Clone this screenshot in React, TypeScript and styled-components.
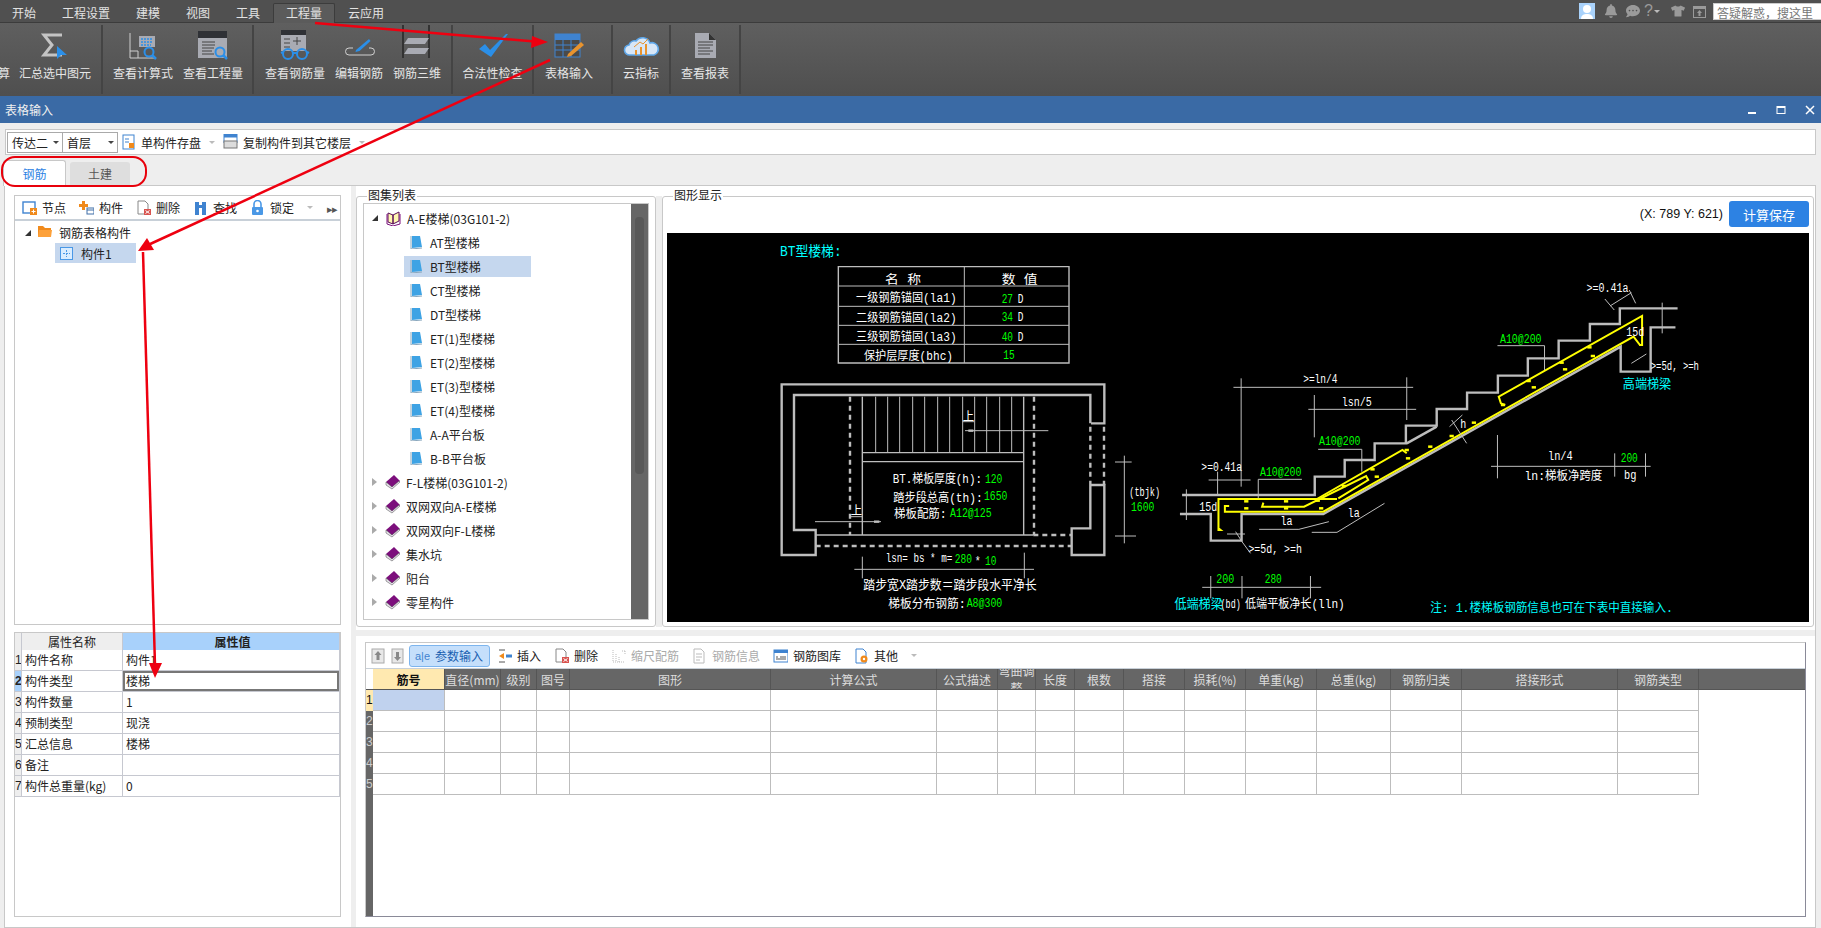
import type { ReactNode } from "react";
import styled, { createGlobalStyle } from "styled-components";
import { FaBell, FaCommentDots, FaTshirt } from "react-icons/fa";

const GlobalStyle = createGlobalStyle`
  html, body {
    margin: 0;
    padding: 0;
    overflow: hidden;
    background: #eeeeee;
  }
  body, button {
    font-family: "Noto Sans CJK SC", "Liberation Sans", sans-serif;
    font-size: 12px;
    color: #222;
  }
`;

const Page = styled.div`
  position: relative;
  width: 1821px;
  height: 928px;
  display: flex;
  flex-direction: column;
  overflow: hidden;
`;

/* ---------- top menu ---------- */

const MenuBar = styled.div`
  height: 23px;
  box-sizing: border-box;
  display: flex;
  align-items: flex-end;
  padding-left: 0;
  background: #505050;
  border-bottom: 1px solid #3c3c3c;
`;

const MenuTab = styled.div<{ $active?: boolean }>`
  height: ${(p) => (p.$active ? 19 : 22)}px;
  line-height: ${(p) => (p.$active ? 17 : 24)}px;
  padding: 0 13px;
  margin-bottom: -1px;
  color: #e2e2e2;
  ${(p) =>
    p.$active &&
    `background: #5b5b5b;
     border: 1px solid #3c3c3c;
     border-bottom: none;
     border-radius: 2px 2px 0 0;
     padding: 0 12px;`}
  &:first-child {
    margin-left: -1px;
  }
`;

const MenuRight = styled.div`
  margin-left: auto;
  height: 22px;
  display: flex;
  align-items: center;
  color: #9a9a9a;
`;

const UserBadge = styled.div`
  width: 16px;
  height: 16px;
  margin-right: 9px;
  background: #a9d2fb;
`;

const HelpMark = styled.span`
  margin: 0 1px 0 4px;
  font: 16px "Liberation Sans", sans-serif;
`;

const SearchBox = styled.div`
  width: 108px;
  height: 17px;
  line-height: 17px;
  margin-left: 6px;
  padding-left: 3px;
  box-sizing: border-box;
  background: #fff;
  border: 1px solid #ccc;
  border-right: none;
  color: #777;
`;

/* ---------- ribbon ---------- */

const Ribbon = styled.div`
  height: 73px;
  display: flex;
  background: linear-gradient(#5f5f5f, #4f4f4f);
`;

const RibbonGroup = styled.div<{ $w: number; $pad?: number }>`
  width: ${(p) => p.$w}px;
  box-sizing: border-box;
  padding-left: ${(p) => p.$pad ?? 0}px;
  display: flex;
  position: relative;
  overflow: hidden;
  border-right: 2px solid #444;
  margin: 2px 0;
`;

const RibbonBtn = styled.div<{ $w: number }>`
  width: ${(p) => p.$w}px;
  flex: none;
  display: flex;
  flex-direction: column;
  align-items: center;
  color: #e6e6e6;
  white-space: nowrap;
`;

const RibbonLabel = styled.div`
  line-height: 16px;
`;

const ClippedLabel = styled.div`
  position: absolute;
  left: -2px;
  top: 40px;
  line-height: 16px;
  color: #e6e6e6;
`;

/* ---------- title bar ---------- */

const TitleBar = styled.div`
  height: 27px;
  display: flex;
  align-items: center;
  padding: 0 4px 0 5px;
  background: #3a6aa5;
  color: #f0f0f0;
`;

const WindowBtns = styled.div`
  margin-left: auto;
  display: flex;
  gap: 15px;
`;

/* ---------- window body ---------- */

const Body = styled.div`
  flex: 1;
  min-height: 0;
  display: flex;
  flex-direction: column;
  padding: 6px 5px 0 4px;
  background: #eeeeee;
`;

const TopTools = styled.div`
  height: 26px;
  box-sizing: border-box;
  display: flex;
  align-items: center;
  margin-left: 1px;
  padding-left: 1px;
  background: #fff;
  border: 1px solid #c8c8c8;
`;

const SelectBox = styled.div<{ $w: number }>`
  width: ${(p) => p.$w}px;
  height: 21px;
  box-sizing: border-box;
  display: flex;
  align-items: center;
  justify-content: space-between;
  padding: 0 3px 0 4px;
  border: 1px solid #aaa;
  & + & {
    border-left: none;
  }
`;

const Caret = styled.i<{ $light?: boolean }>`
  width: 0;
  height: 0;
  flex: none;
  border-left: 3px solid transparent;
  border-right: 3px solid transparent;
  border-top: 3px solid ${(p) => (p.$light ? "#bbb" : "#444")};
`;

const ToolGroup = styled.div<{ $gap?: number; $pad?: number }>`
  display: flex;
  align-items: center;
  gap: ${(p) => p.$gap ?? 13}px;
  padding-left: ${(p) => p.$pad ?? 0}px;
`;

const ToolItem = styled.div<{ $off?: boolean; $active?: boolean }>`
  display: flex;
  align-items: center;
  gap: 5px;
  white-space: nowrap;
  color: ${(p) => (p.$off ? "#aaa" : "#222")};
  ${(p) =>
    p.$active &&
    `height: 20px;
     padding: 0 6px 0 5px;
     background: #c5dffb;
     border: 1px solid #7db5ee;
     border-radius: 3px;
     color: #1a5fb0;`}
`;

const TabRow = styled.div`
  position: relative;
  height: 25px;
  margin-top: 5px;
  display: flex;
  align-items: flex-end;
  gap: 4px;
  padding-left: 0;
`;

const Tab = styled.div<{ $active?: boolean }>`
  width: ${(p) => (p.$active ? 63 : 60)}px;
  height: ${(p) => (p.$active ? 26 : 23)}px;
  box-sizing: border-box;
  margin-left: ${(p) => (p.$active ? -1 : 0)}px;
  display: flex;
  align-items: center;
  justify-content: center;
  border-radius: 3px 3px 0 0;
  color: ${(p) => (p.$active ? "#2d82e3" : "#555")};
  background: ${(p) => (p.$active ? "#fff" : "#dedede")};
  border: ${(p) => (p.$active ? "1px solid #c8c8c8" : "none")};
  border-bottom: none;
  margin-bottom: ${(p) => (p.$active ? -1 : 0)}px;
  z-index: 1;
`;

const RedOutline = styled.div`
  position: absolute;
  left: -3px;
  top: -4px;
  width: 146px;
  height: 31px;
  box-sizing: border-box;
  border: 2px solid #e8000b;
  border-radius: 14px;
  z-index: 2;
`;

const ContentPanel = styled.div`
  flex: 1;
  min-height: 0;
  display: grid;
  grid-template-columns: 346px 5px 1fr;
  background: #fff;
  border: 1px solid #c8c8c8;
`;

const LeftCol = styled.div`
  display: flex;
  flex-direction: column;
  gap: 7px;
  padding: 9px 10px 10px 9px;
  min-height: 0;
`;

const Splitter = styled.div`
  background: #eeeeee;
`;

const TreeBox = styled.div`
  height: 430px;
  box-sizing: border-box;
  flex: none;
  border: 1px solid #c8c8c8;
`;

const BoxTools = styled.div`
  height: 25px;
  box-sizing: border-box;
  display: flex;
  align-items: center;
  padding: 0 3px 0 7px;
  border-bottom: 2px solid #c8d0d8;
`;

const More = styled.span`
  margin-left: auto;
  font-size: 11px;
  letter-spacing: -1px;
  color: #555;
`;

const LeftTree = styled.div`
  padding-top: 1px;
`;

const LeftRoot = styled.div`
  height: 21px;
  display: flex;
  align-items: center;
  padding-left: 10px;
`;

const Expander = styled.i<{ $open?: boolean }>`
  width: 0;
  height: 0;
  flex: none;
  ${(p) =>
    p.$open
      ? `border-left: 6px solid transparent; border-bottom: 6px solid #333;`
      : `border-left: 5px solid #aaa; border-top: 4px solid transparent; border-bottom: 4px solid transparent;`}
`;

const RootLabel = styled.span`
  margin-left: 7px;
`;

const LeftLeaf = styled.div`
  width: 81px;
  height: 20px;
  margin-left: 40px;
  display: flex;
  align-items: center;
  gap: 8px;
  padding-left: 5px;
  box-sizing: border-box;
  background: #c5d7ee;
`;

/* property table */

const PropBox = styled.div`
  flex: 1;
  min-height: 0;
  border: 1px solid #c8c8c8;
`;

const PropRow = styled.div<{ $head?: boolean }>`
  display: grid;
  grid-template-columns: 7px 101px 1fr;
  height: ${(p) => (p.$head ? 17 : 21)}px;
  line-height: ${(p) => (p.$head ? 17 : 20)}px;
  box-sizing: border-box;
  border-bottom: ${(p) => (p.$head ? "none" : "1px solid #c6c8d0")};
  border-right: 1px solid #c6c8d0;
`;

const RowNo = styled.div<{ $on?: boolean }>`
  background: ${(p) => (p.$on ? "#a8d1fb" : "#eeeeee")};
  font-weight: ${(p) => (p.$on ? 700 : 400)};
  font-family: "Liberation Sans", sans-serif;
  font-size: 12px;
  overflow: hidden;
  border-right: 1px solid #c6c8d0;
`;

const PropName = styled.div<{ $head?: boolean }>`
  padding-left: ${(p) => (p.$head ? 0 : 3)}px;
  text-align: ${(p) => (p.$head ? "center" : "left")};
  background: ${(p) => (p.$head ? "#eeeeee" : "#fff")};
  border-right: 1px solid #c6c8d0;
  white-space: nowrap;
`;

const PropValue = styled.div<{ $head?: boolean; $sel?: boolean }>`
  padding-left: 3px;
  text-align: ${(p) => (p.$head ? "center" : "left")};
  font-weight: ${(p) => (p.$head ? 700 : 400)};
  background: ${(p) => (p.$head ? "#a8d1fb" : "#fff")};
  ${(p) => p.$sel && `outline: 2px solid #777; outline-offset: -2px;`}
`;

/* right side */

const RightCol = styled.div`
  display: flex;
  flex-direction: column;
  min-width: 0;
  min-height: 0;
`;

const TopRow = styled.div`
  height: 444px;
  box-sizing: border-box;
  flex: none;
  display: flex;
  padding: 10px 1px 3px 0;
`;

const FieldBox = styled.div<{ $w?: number }>`
  position: relative;
  box-sizing: border-box;
  ${(p) => (p.$w ? `width: ${p.$w}px; flex: none;` : `flex: 1; min-width: 0;`)}
  display: flex;
  flex-direction: column;
  border: 1px solid #c8c8c8;
  border-radius: 3px;
`;

const Legend = styled.div`
  position: absolute;
  left: 10px;
  top: -10px;
  line-height: 16px;
  padding: 0 1px;
  background: #fff;
  color: #222;
`;

const VSplit = styled.div`
  width: 6px;
  flex: none;
  background: #eeeeee;
`;

const HSplit = styled.div`
  height: 6px;
  flex: none;
  background: #eeeeee;
`;

const ListFrame = styled.div`
  flex: 1;
  min-height: 0;
  margin: 6px;
  display: flex;
  border: 1px solid #c8c8c8;
  overflow: hidden;
`;

const ListBody = styled.div`
  flex: 1;
  padding-top: 2px;
`;

const ListRow = styled.div<{ $child?: boolean }>`
  height: 24px;
  display: flex;
  align-items: center;
  padding-left: ${(p) => (p.$child ? 40 : 8)}px;
`;

const RowIcon = styled.span`
  display: flex;
  margin: 0 5px 0 8px;
`;

const LeafBox = styled.div<{ $on?: boolean }>`
  width: 127px;
  height: 21px;
  display: flex;
  align-items: center;
  gap: 6px;
  padding-left: 6px;
  box-sizing: border-box;
  background: ${(p) => (p.$on ? "#c5d7ee" : "transparent")};
`;

const ScrollTrack = styled.div`
  width: 17px;
  flex: none;
  padding: 13px 4px 0;
  box-sizing: border-box;
  background: #666;
`;

const ScrollThumb = styled.div`
  height: 257px;
  background: #585858;
  border-radius: 4px;
`;

const GraphHead = styled.div`
  height: 36px;
  flex: none;
  box-sizing: border-box;
  display: flex;
  align-items: flex-start;
  justify-content: flex-end;
  gap: 6px;
  padding: 4px 4px 0 0;
`;

const Coord = styled.span`
  font: 12.5px/26px "Liberation Sans", sans-serif;
  color: #111;
`;

const SaveBtn = styled.button`
  width: 80px;
  height: 26px;
  padding: 0;
  border: none;
  border-radius: 3px;
  background: #2d82e3;
  color: #fff;
  font-size: 13px;
`;

const Canvas = styled.div`
  margin: 0 4px 4px;
  height: 389px;
  background: #000;
`;

const DiagramSvg = styled.svg`
  display: block;
  font-family: "Liberation Mono", "Noto Sans CJK SC", monospace;
`;

const BottomWrap = styled.div`
  flex: 1;
  min-height: 0;
  padding: 6px 9px 10px 9px;
  display: flex;
`;

const GridBox = styled.div`
  flex: 1;
  min-width: 0;
  display: flex;
  flex-direction: column;
  border: 1px solid #c8c8c8;
  border-bottom: 1px solid #8a8a98;
  border-right: 1px solid #8a8a98;
`;

const GridTools = styled.div`
  height: 26px;
  flex: none;
  box-sizing: border-box;
  display: flex;
  align-items: center;
  padding-left: 5px;
  border-bottom: 1px solid #c8d0d8;
`;

const GridArea = styled.div`
  flex: 1;
  background: linear-gradient(#666, #666) left top / 7px 100% no-repeat;
`;

const GridRow = styled.div<{ $head?: boolean }>`
  display: flex;
  height: 21px;
  ${(p) => p.$head && `background: #666; border-bottom: 1px solid #555; box-sizing: border-box;`}
`;

const HeadCell = styled.div<{ $w: number; $on?: boolean }>`
  width: ${(p) => p.$w}px;
  flex: none;
  box-sizing: border-box;
  display: flex;
  align-items: center;
  justify-content: center;
  overflow: hidden;
  text-align: center;
  line-height: 17px;
  color: ${(p) => (p.$on ? "#111" : "#ddd")};
  font-weight: ${(p) => (p.$on ? 700 : 400)};
  background: ${(p) => (p.$on ? "#ffe9b0" : "#666")};
  border-right: 1px solid #555;
`;

const Corner = styled.div`
  width: 7px;
  flex: none;
  background: #fff;
`;

const NoCell = styled.div<{ $on?: boolean }>`
  width: 7px;
  flex: none;
  overflow: hidden;
  font: 12px/21px "Liberation Sans", sans-serif;
  color: ${(p) => (p.$on ? "#111" : "#ccc")};
  background: ${(p) => (p.$on ? "#ffe9b0" : "#666")};
`;

const DataCell = styled.div<{ $w: number; $on?: boolean }>`
  width: ${(p) => p.$w}px;
  flex: none;
  box-sizing: border-box;
  background: ${(p) => (p.$on ? "#c0d2ee" : "#fff")};
  border-right: 1px solid #bdbdbd;
  border-bottom: 1px solid #bdbdbd;
`;

const ArrowLayer = styled.svg`
  position: absolute;
  left: 0;
  top: 0;
  pointer-events: none;
  z-index: 5;
`;

/* ---------- icons ---------- */

const Ico = ({ s = 40, h, children }: { s?: number; h?: number; children: ReactNode }) => (
  <svg width={s} height={h ?? s} viewBox={`0 0 ${s} ${h ?? s}`} style={{ flex: "none" }}>
    {children}
  </svg>
);

const Lens = ({ x, y }: { x: number; y: number }) => (
  <g fill="none" stroke="#2b8fe8" strokeWidth="2">
    <circle cx={x} cy={y} r="4.5" />
    <path d={`M${x + 3} ${y + 3}l4 4`} strokeWidth="2.5" />
  </g>
);

const ribbonIcons: Record<string, ReactNode> = {
  sum: (
    <>
      <path d="M27 10H9l8 10-8 10h18" fill="none" stroke="#c4c4c4" strokeWidth="3" />
      <path d="M22 21l10 9h-6l-4 4z" fill="#2b8fe8" />
    </>
  ),
  formula: (
    <>
      <path d="M7 8v25h24M7 26h8v7" fill="none" stroke="#cfcfcf" />
      <rect x="16" y="11" width="16" height="11" fill="#a9abb3" />
      <path d="M18 14h12M18 17h12M18 20h10" stroke="#2b8fe8" strokeWidth="1.6" strokeDasharray="2 1" />
      <Lens x={26} y={27} />
    </>
  ),
  amount: (
    <>
      <rect x="5" y="6" width="29" height="27" fill="#a9abb3" />
      <rect x="5" y="6" width="29" height="7" fill="#2f3136" />
      <path d="M9 17h13M9 20h13M9 23h12M9 26h10M9 29h12" stroke="#444" />
      <Lens x={27} y={27} />
    </>
  ),
  rebar: (
    <>
      <rect x="6" y="5" width="25" height="21" fill="#a9abb3" />
      <rect x="6" y="5" width="25" height="5" fill="#2f3136" />
      <path d="M9 14h6M9 18h6M9 22h6M18 16h8M22 12v8" stroke="#444" />
      <g fill="none" stroke="#2b8fe8" strokeWidth="2">
        <circle cx="13" cy="29" r="5" />
        <circle cx="27" cy="29" r="5" />
        <path d="M18 28h4M8 27l-2 1M32 27l2 1" />
      </g>
    </>
  ),
  edit: (
    <>
      <path d="M14 23h-4a3 3 0 0 0 0 7h22a3 3 0 0 0 0-7h-2" fill="none" stroke="#d0d0d0" />
      <path d="M17 25l13-11 1.5 2-11 10-4 1z" fill="#2b8fe8" />
    </>
  ),
  three: (
    <>
      <path d="M6 0v33M32 0v33" stroke="#333" strokeWidth="2" />
      <path d="M11 13h21l-4 6H7zM11 23h21l-4 6H7z" fill="#a9abb3" />
    </>
  ),
  check: <path d="M6 24l6-5 5 6L33 9h2L18 32z" fill="#2b8fe8" />,
  table: (
    <>
      <rect x="6" y="9" width="25" height="23" fill="#4a4a4a" stroke="#3f83d0" />
      <rect x="6" y="9" width="25" height="6" fill="#3f83d0" />
      <path d="M6 20h25M6 25h25M14 15v17M22 15v17" stroke="#3f83d0" />
      <path d="M19 29l13-12 3 3-13 11-4 1z" fill="#e8932e" />
    </>
  ),
  cloud: (
    <>
      <path
        d="M9 30a5 5 0 0 1-1-10 6 6 0 0 1 7-4 8 8 0 0 1 14 2 6 6 0 0 1 4 12z"
        fill="#d7e6f7"
        stroke="#5ea6e8"
        strokeWidth="1.6"
      />
      <path d="M15 30v-5M20 30v-8M25 30v-11" stroke="#e8932e" strokeWidth="2" />
      <path d="M13 22l6-5 3 2 5-5" fill="none" stroke="#e8932e" />
    </>
  ),
  report: (
    <>
      <path d="M10 8h14l7 7v18H10z" fill="#a9abb3" />
      <path d="M24 8l7 7h-7z" fill="#333" />
      <path d="M13 17h15M13 20h15M13 23h12M13 26h15M13 29h12" stroke="#444" />
    </>
  ),
};

const FolderIcon = () => (
  <Ico s={14}>
    <path d="M0 2h5l2 2h6v9H0z" fill="#f08a1c" />
    <path d="M1 6h13l-1 7H0z" fill="#fda13a" />
  </Ico>
);

const ComponentIcon = () => (
  <Ico s={13}>
    <rect x="0.5" y="0.5" width="12" height="12" fill="#d9ecff" stroke="#4a98e6" />
    <path d="M3 6.5h7M6.5 3v7" stroke="#4a98e6" strokeDasharray="2 1" />
  </Ico>
);

const SheetIcon = () => (
  <Ico s={14}>
    <path d="M2 1h8l2 11-10 1z" fill="#3ea3e4" />
    <path d="M1 1v13l11-1" fill="none" stroke="#8aa8bd" />
  </Ico>
);

const BookIcon = () => (
  <Ico s={16}>
    <path d="M1 8l8-7 6 6-8 7z" fill="#7c0f7c" />
    <path d="M1 8v3l6 4 8-7-1-1-7 6z" fill="#e8e4ec" stroke="#444" strokeWidth="0.5" />
  </Ico>
);

const OpenBookIcon = () => (
  <Ico s={16}>
    <path d="M2 3l5 2v9l-5-2zM7 5l6-3v9l-6 3z" fill="#fff7b0" stroke="#5a0d5a" />
    <path d="M1 4v10l6 2 7-2V4" fill="none" stroke="#7c0f7c" />
  </Ico>
);

const toolIcons: Record<string, ReactNode> = {
  node: (
    <>
      <rect x="1" y="2" width="12" height="11" fill="#fff" stroke="#3f83d0" strokeWidth="1.4" />
      <rect x="8" y="8" width="7" height="7" fill="#f08a1c" />
      <path d="M11.5 9.5v4M9.5 11.5h4" stroke="#fff" />
    </>
  ),
  part: (
    <>
      <path d="M3 1h3v3h3v3H6v3H3V7H0V4h3z" fill="#f08a1c" />
      <rect x="8" y="8" width="7" height="6" fill="#fff" stroke="#3f6ea8" />
      <path d="M8 10h7" stroke="#3f6ea8" />
    </>
  ),
  del: (
    <>
      <path d="M2 1h7l3 3v10H2z" fill="#fff" stroke="#888" />
      <rect x="8" y="9" width="7" height="6" fill="#d9534f" />
      <path d="M9.5 10.5l4 3M13.5 10.5l-4 3" stroke="#fff" />
    </>
  ),
  find: <path d="M2 2h4v3h3V2h4v13H9V8H6v7H2z" fill="#3f83d0" />,
  lock: (
    <>
      <path d="M4 7V4a3.5 3.5 0 0 1 7 0v3" fill="none" stroke="#4a98e6" strokeWidth="1.6" />
      <rect x="2" y="7" width="11" height="8" rx="1" fill="#4a98e6" />
      <circle cx="7.5" cy="11" r="1.3" fill="#fff" />
    </>
  ),
  save: (
    <>
      <rect x="2" y="1" width="11" height="14" fill="#fff" stroke="#3f83d0" />
      <path d="M4 5h4M4 8h4" stroke="#3f83d0" />
      <rect x="8" y="9" width="5" height="5" fill="#f08a1c" />
    </>
  ),
  copy: (
    <>
      <rect x="1" y="0.5" width="13" height="8" fill="#fff" stroke="#3f83d0" />
      <rect x="1" y="0.5" width="13" height="3" fill="#3f83d0" />
      <rect x="1" y="7" width="13" height="7" fill="#dcdcdc" stroke="#777" />
    </>
  ),
  up: (
    <>
      <rect x="1" y="1" width="12" height="14" fill="#e8e8e8" stroke="#aaa" />
      <path d="M7 3l3.5 4H8.5v5h-3V7H3.5z" fill="#888" />
    </>
  ),
  down: (
    <>
      <rect x="1" y="1" width="11" height="14" fill="#e8e8e8" stroke="#aaa" />
      <path d="M6.5 13L3 9h2V4h3v5h2z" fill="#888" />
    </>
  ),
  insert: (
    <>
      <path d="M2 2h6M2 14h6M11 8h4" stroke="#555" />
      <path d="M7 5L2 8l5 3z" fill="#f08a1c" />
      <rect x="9" y="6.5" width="6" height="3" fill="#3f83d0" />
    </>
  ),
  scale: <path d="M2 2v12M5 6v8M8 9v5M11 3h3M14 3v3M2 14h12" stroke="#bbb" strokeDasharray="1 1" fill="none" />,
  info: (
    <>
      <path d="M2 1h7l3 3v11H2z" fill="#fff" stroke="#bbb" />
      <path d="M4 6h6M4 9h6M4 12h4" stroke="#bbb" />
    </>
  ),
  lib: (
    <>
      <rect x="1" y="2" width="14" height="12" fill="#fff" stroke="#3f83d0" />
      <rect x="1" y="2" width="14" height="3" fill="#3f83d0" />
      <path d="M3 9h2M7 9h6M3 11h10" stroke="#555" />
    </>
  ),
  other: (
    <>
      <path d="M2 1h7l3 3v11H2z" fill="#fff" stroke="#3f83d0" />
      <circle cx="10" cy="11" r="3.5" fill="#f08a1c" />
      <circle cx="10" cy="11" r="1.2" fill="#fff" />
    </>
  ),
};

const Tool = ({ i, children, off, active }: { i: string; children: ReactNode; off?: boolean; active?: boolean }) => (
  <ToolItem $off={off} $active={active}>
    <Ico s={15} h={16}>
      {toolIcons[i]}
    </Ico>
    {children}
  </ToolItem>
);

/* ---------- stair drawing, points are read off zoomed crops ---------- */

const left = (p: number[]) => {
  const out: string[] = [];
  for (let i = 0; i < p.length; i += 2) out.push(`${660 + p[i] / 3},${230 + p[i + 1] / 3}`);
  return out.join(" ");
};
const right = (p: number[]) => {
  const out: string[] = [];
  for (let i = 0; i < p.length; i += 2) out.push(`${1150 + p[i] / 2.337},${230 + p[i + 1] / 3}`);
  return out.join(" ");
};

const W = "#ffffff";
const G = "#00ff00";
const C = "#00ffff";

// x, baseline, width (crop units), text, colour, size
type Lbl = [number, number, number, string, string?, number?];

const leftLabels: Lbl[] = [
  [360, 78, 185, "BT型楼梯:", C, 14],
  [675, 163, 108, "名  称"],
  [1025, 162, 108, "数  值"],
  [588, 215, 302, "一级钢筋锚固(la1)"],
  [1025, 220, 34, "27", G],
  [1073, 220, 17, "D"],
  [588, 275, 302, "二级钢筋锚固(la2)"],
  [1025, 272, 34, "34", G],
  [1073, 272, 17, "D"],
  [588, 332, 302, "三级钢筋锚固(la3)"],
  [1025, 332, 34, "40", G],
  [1073, 332, 17, "D"],
  [612, 390, 267, "保护层厚度(bhc)"],
  [1030, 386, 34, "15", G],
  [908, 572, 34, "上"],
  [572, 856, 34, "上"],
  [698, 760, 268, "BT.梯板厚度(h):"],
  [975, 760, 52, "120", G],
  [700, 815, 268, "踏步段总高(th):"],
  [972, 811, 70, "1650", G],
  [702, 863, 158, "梯板配筋:"],
  [870, 862, 125, "A12@125", G],
  [1408, 798, 92, "(tbjk)"],
  [1413, 842, 70, "1600", G],
  [677, 996, 200, "lsn= bs * m="],
  [884, 1000, 52, "280", G],
  [944, 1004, 18, "*"],
  [975, 1004, 34, "10", G],
  [610, 1076, 520, "踏步宽X踏步数＝踏步段水平净长", W, 13],
  [685, 1134, 232, "梯板分布钢筋:"],
  [920, 1130, 107, "A8@300", G],
];

const rightLabels: Lbl[] = [
  [358, 458, 80, ">=ln/4"],
  [448, 527, 70, "lsn/5"],
  [120, 722, 95, ">=0.41a"],
  [1020, 187, 98, ">=0.41a"],
  [818, 338, 97, "A10@200", G],
  [395, 645, 97, "A10@200", G],
  [257, 738, 97, "A10@200", G],
  [115, 842, 42, "15d"],
  [1113, 317, 42, "15d"],
  [1170, 421, 113, ">=5d, >=h"],
  [725, 593, 14, "h"],
  [1105, 473, 113, "高端梯梁", C, 13],
  [930, 690, 58, "ln/4"],
  [1100, 695, 40, "200", G],
  [875, 750, 182, "ln:梯板净跨度"],
  [1108, 748, 29, "bg"],
  [305, 885, 28, "la"],
  [462, 860, 28, "la"],
  [230, 970, 125, ">=5d, >=h"],
  [155, 1058, 42, "200", G],
  [268, 1060, 40, "280", G],
  [57, 1135, 113, "低端梯梁", C, 13],
  [165, 1135, 47, "(bd)"],
  [222, 1135, 233, "低端平板净长(lln)"],
  [655, 1145, 567, "注: 1.楼梯板钢筋信息也可在下表中直接输入.", C],
];

const wall = { fill: "none", stroke: "#bdbdbd", strokeWidth: 2.4 };
const thin = { fill: "none", stroke: "#bdbdbd", strokeWidth: 1 };
const mid = { fill: "none", stroke: "#bdbdbd", strokeWidth: 1.4 };
const dash = { ...wall, strokeDasharray: "5 4" };
const bar = { fill: "none", stroke: "#ffff00", strokeWidth: 2 };

const treads = [647, 683, 719, 758, 794, 833, 869, 908, 944, 980, 1019, 1055];
const dots = [
  225, 814, 225, 835, 318, 814, 318, 835, 392, 812, 400, 835, 453, 768, 520, 718, 600, 660, 603, 685, 530, 740, 655, 650,
  705, 618, 757, 578, 825, 525, 897, 472, 970, 418, 1035, 378, 885, 453, 962, 398, 1027, 352,
];

const Diagram = () => (
  <DiagramSvg width="1142" height="389" viewBox="667 233 1142 389">
    {/* plan */}
    <polygon points={left([535, 110, 1227, 110, 1227, 399, 535, 399])} {...mid} />
    <polyline points={left([913, 110, 913, 399])} {...thin} />
    {[168, 229, 286, 343].map((y) => (
      <polyline key={y} points={left([535, y, 1227, y])} {...thin} />
    ))}
    <polyline points={left([1293, 580, 1333, 580, 1333, 463, 365, 463, 365, 975, 467, 975, 467, 900, 402, 900, 402, 495, 1291, 495, 1291, 580])} {...wall} />
    <polyline points={left([1293, 765, 1333, 765, 1333, 975, 1235, 975, 1235, 895, 1291, 895, 1291, 765])} {...wall} />
    <polyline points={left([1291, 590, 1291, 765])} {...dash} />
    <polyline points={left([1332, 590, 1332, 765])} {...dash} />
    <polyline points={left([467, 915, 1120, 915])} {...mid} />
    <polyline points={left([1120, 915, 1235, 915])} {...dash} />
    <polyline points={left([467, 948, 1235, 948])} {...dash} />
    <polyline points={left([570, 500, 570, 915])} {...dash} />
    <polyline points={left([1122, 500, 1122, 915])} {...dash} />
    <polyline points={left([607, 500, 607, 915])} {...mid} />
    <polyline points={left([1091, 500, 1091, 915])} {...mid} />
    <polyline points={left([607, 668, 1091, 668])} {...mid} />
    <polyline points={left([607, 695, 1091, 695])} {...mid} />
    {treads.map((x) => (
      <polyline key={x} points={left([x, 500, x, 668])} {...thin} />
    ))}
    <polyline points={left([908, 575, 942, 575])} {...thin} />
    <polyline points={left([915, 602, 1165, 602])} {...thin} />
    <polyline points={left([925, 602, 940, 602])} {...wall} />
    <polyline points={left([572, 860, 606, 860])} {...thin} />
    <polyline points={left([465, 875, 663, 875])} {...thin} />
    <polyline points={left([642, 875, 658, 875])} {...wall} />
    <polyline points={left([1393, 677, 1393, 940])} {...thin} />
    <polyline points={left([1365, 696, 1415, 696])} {...thin} />
    <polyline points={left([1365, 918, 1428, 918])} {...thin} />
    <polyline points={left([583, 1018, 1122, 1018])} {...thin} />
    <polyline points={left([607, 980, 607, 1045])} {...thin} />
    <polyline points={left([1093, 968, 1093, 1045])} {...thin} />

    {/* section */}
    <polyline
      points={right([75, 795, 385, 795, 385, 740, 455, 740, 455, 690, 525, 690, 525, 640, 598, 640, 598, 587, 670, 587, 670, 537, 741, 537, 741, 488, 813, 488, 813, 437, 883, 437, 883, 385, 955, 385, 955, 332, 1028, 332, 1028, 282, 1098, 282, 1098, 235, 1233, 235])}
      {...wall}
    />
    <polyline points={right([600, 640, 670, 590])} {...wall} />
    <polyline points={right([70, 852, 142, 852, 142, 932, 214, 932, 214, 852, 405, 852, 1100, 350, 1100, 425, 1170, 425, 1170, 292, 1228, 292])} {...wall} />
    <polyline points={right([160, 895, 160, 900, 165, 900, 160, 895, 160, 807, 437, 807])} {...bar} />
    <polyline points={right([390, 807, 590, 660, 600, 670])} {...bar} />
    <polyline points={right([185, 828, 175, 828, 175, 845, 405, 845, 1130, 320, 1145, 345])} {...bar} />
    <polyline points={right([265, 818, 262, 830, 360, 830, 505, 738, 510, 750, 440, 805])} {...bar} />
    <polyline points={right([830, 525, 820, 520, 815, 500, 1150, 258, 1150, 345, 1143, 345])} {...bar} />
    {dots.map((v, i) =>
      i % 2 === 0 ? (
        <polyline key={i} points={right([v - 5, dots[i + 1], v + 5, dots[i + 1]])} fill="none" stroke="#ffff00" strokeWidth="2.5" />
      ) : null
    )}
    <polyline points={right([195, 472, 615, 472])} {...thin} />
    <polyline points={right([213, 445, 213, 770])} {...thin} />
    <polyline points={right([600, 442, 600, 570])} {...thin} />
    <polyline points={right([370, 538, 622, 538])} {...thin} />
    <polyline points={right([384, 495, 384, 622])} {...thin} />
    <polyline points={right([137, 750, 235, 750])} {...thin} />
    <polyline points={right([158, 725, 158, 795])} {...thin} />
    <polyline points={right([85, 778, 85, 870])} {...thin} />
    <polyline points={right([812, 347, 922, 347, 922, 420])} {...thin} />
    <polyline points={right([393, 658, 495, 658, 495, 725])} {...thin} />
    <polyline points={right([355, 748, 253, 748, 253, 805])} {...thin} />
    <polyline points={right([1075, 228, 1125, 188])} {...thin} />
    <polyline points={right([1063, 207, 1085, 240])} {...thin} />
    <polyline points={right([1120, 180, 1135, 220])} {...thin} />
    <polyline points={right([1197, 218, 1197, 310])} {...thin} />
    <polyline points={right([1125, 400, 1160, 372])} {...thin} />
    <polyline points={right([700, 590, 730, 555])} {...thin} />
    <polyline points={right([705, 570, 740, 640])} {...thin} />
    <polyline points={right([797, 709, 1170, 709])} {...thin} />
    <polyline points={right([812, 615, 812, 745])} {...thin} />
    <polyline points={right([1086, 670, 1086, 740])} {...thin} />
    <polyline points={right([1158, 670, 1158, 740])} {...thin} />
    <polyline points={right([255, 898, 348, 898, 418, 875])} {...thin} />
    <polyline points={right([378, 907, 437, 907, 548, 820])} {...thin} />
    <polyline points={right([180, 912, 222, 912])} {...thin} />
    <polyline points={right([200, 905, 215, 935, 235, 970])} {...thin} />
    <polyline points={right([122, 1072, 400, 1072])} {...thin} />
    {[142, 215, 375].map((x) => (
      <polyline key={x} points={right([x, 1038, x, 1105])} {...thin} />
    ))}

    {leftLabels.map(([x, y, w, t, c, s], i) => (
      <text key={i} x={660 + x / 3} y={230 + y / 3} textLength={w / 3} lengthAdjust="spacingAndGlyphs" fontSize={s ?? 12} fill={c ?? W}>
        {t}
      </text>
    ))}
    {rightLabels.map(([x, y, w, t, c, s], i) => (
      <text key={i} x={1150 + x / 2.337} y={230 + y / 3} textLength={w / 2.337} lengthAdjust="spacingAndGlyphs" fontSize={s ?? 12} fill={c ?? W}>
        {t}
      </text>
    ))}
  </DiagramSvg>
);

/* ---------- data ---------- */

const menus = ["开始", "工程设置", "建模", "视图", "工具", "工程量", "云应用"];

const ribbon = [
  { w: 103, pad: 19, items: [{ i: "sum", t: "汇总选中图元", w: 72 }] },
  {
    w: 151,
    pad: 5,
    items: [
      { i: "formula", t: "查看计算式", w: 70 },
      { i: "amount", t: "查看工程量", w: 70 },
    ],
  },
  {
    w: 199,
    pad: 6,
    items: [
      { i: "rebar", t: "查看钢筋量", w: 70 },
      { i: "edit", t: "编辑钢筋", w: 58 },
      { i: "three", t: "钢筋三维", w: 58 },
    ],
  },
  { w: 81, pad: 0, items: [{ i: "check", t: "合法性检查", w: 79 }] },
  { w: 79, pad: 0, items: [{ i: "table", t: "表格输入", w: 70 }] },
  { w: 58, pad: 0, items: [{ i: "cloud", t: "云指标", w: 56 }] },
  { w: 70, pad: 0, items: [{ i: "report", t: "查看报表", w: 68 }] },
];

const props = [
  ["构件名称", "构件1"],
  ["构件类型", "楼梯"],
  ["构件数量", "1"],
  ["预制类型", "现浇"],
  ["汇总信息", "楼梯"],
  ["备注", ""],
  ["构件总重量(kg)", "0"],
];

const leaves = ["AT型楼梯", "BT型楼梯", "CT型楼梯", "DT型楼梯", "ET(1)型楼梯", "ET(2)型楼梯", "ET(3)型楼梯", "ET(4)型楼梯", "A-A平台板", "B-B平台板"];
const books = ["F-L楼梯(03G101-2)", "双网双向A-E楼梯", "双网双向F-L楼梯", "集水坑", "阳台", "零星构件", ""];

const columns: [string, number][] = [
  ["筋号", 72],
  ["直径(mm)", 56],
  ["级别", 36],
  ["图号", 33],
  ["图形", 201],
  ["计算公式", 166],
  ["公式描述", 61],
  ["弯曲调整", 38],
  ["长度", 39],
  ["根数", 49],
  ["搭接", 61],
  ["损耗(%)", 61],
  ["单重(kg)", 71],
  ["总重(kg)", 74],
  ["钢筋归类", 71],
  ["搭接形式", 156],
  ["钢筋类型", 81],
];

function App() {
  return (
    <Page>
      <GlobalStyle />
      <MenuBar>
        {menus.map((m) => (
          <MenuTab key={m} $active={m === "工程量"}>
            {m}
          </MenuTab>
        ))}
        <MenuRight>
          <UserBadge>
            <Ico s={16}>
              <circle cx="8" cy="6" r="4" fill="#fff" />
              <path d="M2 16c0-4 3-5 6-5s6 1 6 5z" fill="#fff" />
            </Ico>
          </UserBadge>
          <FaBell size={14} />
          <FaCommentDots size={14} style={{ marginLeft: 8 }} />
          <HelpMark>?</HelpMark>
          <Caret $light />
          <FaTshirt size={14} style={{ margin: "0 7px 0 11px" }} />
          <Ico s={15}>
            <rect x="1.5" y="2.5" width="12" height="11" fill="none" stroke="#9a9a9a" />
            <path d="M2 2h11v3H2zM7.5 6l2.5 3H8.5v3h-2V9H5z" fill="#9a9a9a" />
          </Ico>
          <SearchBox>答疑解惑，搜这里</SearchBox>
        </MenuRight>
      </MenuBar>

      <Ribbon>
        {ribbon.map((g, n) => (
          <RibbonGroup key={n} $w={g.w} $pad={g.pad}>
            {n === 0 && <ClippedLabel>算</ClippedLabel>}
            {g.items.map((b) => (
              <RibbonBtn key={b.t} $w={b.w}>
                <Ico s={40} h={40}>{ribbonIcons[b.i]}</Ico>
                <RibbonLabel>{b.t}</RibbonLabel>
              </RibbonBtn>
            ))}
          </RibbonGroup>
        ))}
      </Ribbon>

      <TitleBar>
        表格输入
        <WindowBtns>
          <Ico s={14}>
            <rect x="3" y="9" width="8" height="2" fill="#fff" />
          </Ico>
          <Ico s={14}>
            <rect x="3" y="3.5" width="8" height="7" fill="none" stroke="#fff" />
            <rect x="3" y="3" width="8" height="2" fill="#fff" />
          </Ico>
          <Ico s={14}>
            <path d="M3 3l8 8M11 3l-8 8" stroke="#fff" strokeWidth="1.5" />
          </Ico>
        </WindowBtns>
      </TitleBar>

      <Body>
        <TopTools>
          <SelectBox $w={56}>
            传达二
            <Caret />
          </SelectBox>
          <SelectBox $w={55}>
            首层
            <Caret />
          </SelectBox>
          <ToolGroup $pad={3} $gap={8}>
            <Tool i="save">单构件存盘</Tool>
            <Caret $light />
            <Tool i="copy">复制构件到其它楼层</Tool>
            <Caret $light />
          </ToolGroup>
        </TopTools>

        <TabRow>
          <Tab $active>钢筋</Tab>
          <Tab>土建</Tab>
          <RedOutline />
        </TabRow>

        <ContentPanel>
          <LeftCol>
            <TreeBox>
              <BoxTools>
                <ToolGroup>
                  <Tool i="node">节点</Tool>
                  <Tool i="part">构件</Tool>
                  <Tool i="del">删除</Tool>
                  <Tool i="find">查找</Tool>
                  <Tool i="lock">锁定</Tool>
                  <Caret $light />
                </ToolGroup>
                <More>▸▸</More>
              </BoxTools>
              <LeftTree>
                <LeftRoot>
                  <Expander $open />
                  <RootLabel>
                    <FolderIcon />
                  </RootLabel>
                  <RootLabel>钢筋表格构件</RootLabel>
                </LeftRoot>
                <LeftLeaf>
                  <ComponentIcon />
                  构件1
                </LeftLeaf>
              </LeftTree>
            </TreeBox>
            <PropBox>
              <PropRow $head>
                <RowNo />
                <PropName $head>属性名称</PropName>
                <PropValue $head>属性值</PropValue>
              </PropRow>
              {props.map(([k, v], i) => (
                <PropRow key={k}>
                  <RowNo $on={i === 1}>{i + 1}</RowNo>
                  <PropName>{k}</PropName>
                  <PropValue $sel={i === 1}>{v}</PropValue>
                </PropRow>
              ))}
            </PropBox>
          </LeftCol>

          <Splitter />

          <RightCol>
            <TopRow>
              <FieldBox $w={300}>
                <Legend>图集列表</Legend>
                <ListFrame>
                  <ListBody>
                    <ListRow>
                      <Expander $open />
                      <RowIcon>
                        <OpenBookIcon />
                      </RowIcon>
                      A-E楼梯(03G101-2)
                    </ListRow>
                    {leaves.map((l) => (
                      <ListRow key={l} $child>
                        <LeafBox $on={l === "BT型楼梯"}>
                          <SheetIcon />
                          {l}
                        </LeafBox>
                      </ListRow>
                    ))}
                    {books.map((b) => (
                      <ListRow key={b}>
                        <Expander />
                        <RowIcon>
                          <BookIcon />
                        </RowIcon>
                        {b}
                      </ListRow>
                    ))}
                  </ListBody>
                  <ScrollTrack>
                    <ScrollThumb />
                  </ScrollTrack>
                </ListFrame>
              </FieldBox>
              <VSplit />
              <FieldBox>
                <Legend>图形显示</Legend>
                <GraphHead>
                  <Coord>(X: 789 Y: 621)</Coord>
                  <SaveBtn>计算保存</SaveBtn>
                </GraphHead>
                <Canvas>
                  <Diagram />
                </Canvas>
              </FieldBox>
            </TopRow>
            <HSplit />
            <BottomWrap>
              <GridBox>
                <GridTools>
                  <ToolGroup $gap={5}>
                    <Ico s={15} h={16}>{toolIcons.up}</Ico>
                    <Ico s={13} h={16}>{toolIcons.down}</Ico>
                    <ToolItem $active>
                      <Ico s={15} h={16}>
                        <text x="0" y="12" fontSize="11" fill="#3f83d0" fontFamily="Liberation Sans">
                          a|e
                        </text>
                      </Ico>
                      参数输入
                    </ToolItem>
                  </ToolGroup>
                  <ToolGroup $gap={13} $pad={7}>
                    <Tool i="insert">插入</Tool>
                    <Tool i="del">删除</Tool>
                    <Tool i="scale" off>
                      缩尺配筋
                    </Tool>
                    <Tool i="info" off>
                      钢筋信息
                    </Tool>
                    <Tool i="lib">钢筋图库</Tool>
                    <Tool i="other">其他</Tool>
                    <Caret $light />
                  </ToolGroup>
                </GridTools>
                <GridArea>
                  <GridRow $head>
                    <Corner />
                    {columns.map(([t, w], i) => (
                      <HeadCell key={t} $w={w} $on={i === 0}>
                        {t}
                      </HeadCell>
                    ))}
                  </GridRow>
                  {[1, 2, 3, 4, 5].map((r) => (
                    <GridRow key={r}>
                      <NoCell $on={r === 1}>{r}</NoCell>
                      {columns.map(([t, w], i) => (
                        <DataCell key={t} $w={w} $on={r === 1 && i === 0} />
                      ))}
                    </GridRow>
                  ))}
                </GridArea>
              </GridBox>
            </BottomWrap>
          </RightCol>
        </ContentPanel>
      </Body>

      {/* red guide arrows drawn over the screenshot */}
      <ArrowLayer width="1821" height="928">
        <g fill="none" stroke="#ee0010" strokeWidth="2.5">
          <path d="M315 23L535 41.5" />
          <path d="M550 60L148 245" />
          <path d="M143 252L155 665" />
        </g>
        <g fill="#ee0010">
          <polygon points="532,36 548,42 531,48" />
          <polygon points="138,251 147,238 154,250" />
          <polygon points="155,678 149,663 162,663" />
        </g>
      </ArrowLayer>
    </Page>
  );
}

export default App;
